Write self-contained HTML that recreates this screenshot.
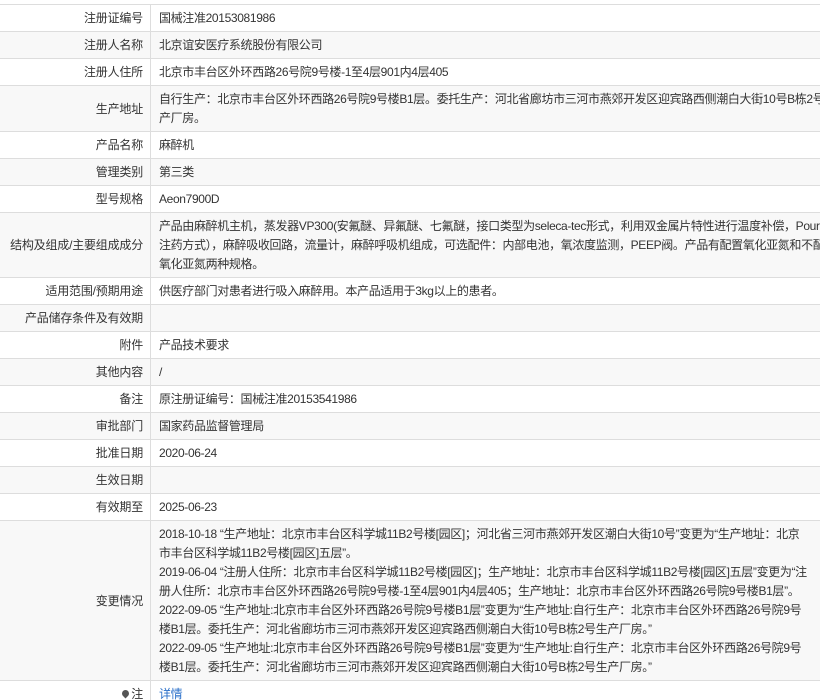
<!DOCTYPE html>
<html><head><meta charset="utf-8">
<style>
html,body{margin:0;padding:0;background:#fff;overflow:hidden;width:820px;height:700px}
table{border-collapse:collapse;width:862px;margin-top:4px;font-family:"Liberation Sans","Noto Sans CJK SC",sans-serif;font-size:12px;color:#333;table-layout:fixed}
td{border-top:1px solid #ddd;border-bottom:1px solid #ddd;padding:4px 8px 3px;line-height:19px;vertical-align:middle;white-space:nowrap;overflow:hidden;letter-spacing:-0.35px}
td.l{width:143px;padding-left:0;text-align:right;border-right:1px solid #ddd;padding-right:7px;letter-spacing:-0.2px}
tr:nth-child(even) td{background:#f8f8f8}
a{color:#2a6fc9;text-decoration:none}
.pin{display:inline-block;width:7px;height:7px;background:#555;border-radius:50% 50% 50% 0;transform:rotate(-45deg);margin-right:2px;vertical-align:1px}
</style></head><body>
<table>
<tr><td class="l">注册证编号</td><td>国械注准20153081986</td></tr>
<tr><td class="l">注册人名称</td><td>北京谊安医疗系统股份有限公司</td></tr>
<tr><td class="l">注册人住所</td><td>北京市丰台区外环西路26号院9号楼-1至4层901内4层405</td></tr>
<tr><td class="l">生产地址</td><td>自行生产：北京市丰台区外环西路26号院9号楼B1层。委托生产：河北省廊坊市三河市燕郊开发区迎宾路西侧潮白大街10号B栋2号生<br>产厂房。</td></tr>
<tr><td class="l">产品名称</td><td>麻醉机</td></tr>
<tr><td class="l">管理类别</td><td>第三类</td></tr>
<tr><td class="l">型号规格</td><td>Aeon7900D</td></tr>
<tr><td class="l">结构及组成/主要组成成分</td><td>产品由麻醉机主机，蒸发器VP300(安氟醚、异氟醚、七氟醚，接口类型为seleca-tec形式，利用双金属片特性进行温度补偿，Pour-fill<br>注药方式），麻醉吸收回路，流量计，麻醉呼吸机组成，可选配件：内部电池，氧浓度监测，PEEP阀。产品有配置氧化亚氮和不配置<br>氧化亚氮两种规格。</td></tr>
<tr><td class="l">适用范围/预期用途</td><td>供医疗部门对患者进行吸入麻醉用。本产品适用于3kg以上的患者。</td></tr>
<tr><td class="l">产品储存条件及有效期</td><td>&nbsp;</td></tr>
<tr><td class="l">附件</td><td>产品技术要求</td></tr>
<tr><td class="l">其他内容</td><td>/</td></tr>
<tr><td class="l">备注</td><td>原注册证编号：国械注准20153541986</td></tr>
<tr><td class="l">审批部门</td><td>国家药品监督管理局</td></tr>
<tr><td class="l">批准日期</td><td>2020-06-24</td></tr>
<tr><td class="l">生效日期</td><td>&nbsp;</td></tr>
<tr><td class="l">有效期至</td><td>2025-06-23</td></tr>
<tr><td class="l">变更情况</td><td>2018-10-18 “生产地址：北京市丰台区科学城11B2号楼[园区]；河北省三河市燕郊开发区潮白大街10号”变更为“生产地址：北京<br>市丰台区科学城11B2号楼[园区]五层”。<br>2019-06-04 “注册人住所：北京市丰台区科学城11B2号楼[园区]；生产地址：北京市丰台区科学城11B2号楼[园区]五层”变更为“注<br>册人住所：北京市丰台区外环西路26号院9号楼-1至4层901内4层405；生产地址：北京市丰台区外环西路26号院9号楼B1层”。<br>2022-09-05 “生产地址:北京市丰台区外环西路26号院9号楼B1层”变更为“生产地址:自行生产：北京市丰台区外环西路26号院9号<br>楼B1层。委托生产：河北省廊坊市三河市燕郊开发区迎宾路西侧潮白大街10号B栋2号生产厂房。”<br>2022-09-05 “生产地址:北京市丰台区外环西路26号院9号楼B1层”变更为“生产地址:自行生产：北京市丰台区外环西路26号院9号<br>楼B1层。委托生产：河北省廊坊市三河市燕郊开发区迎宾路西侧潮白大街10号B栋2号生产厂房。”</td></tr>
<tr><td class="l"><span class="pin"></span>注</td><td><a>详情</a></td></tr>
</table>
</body></html>
